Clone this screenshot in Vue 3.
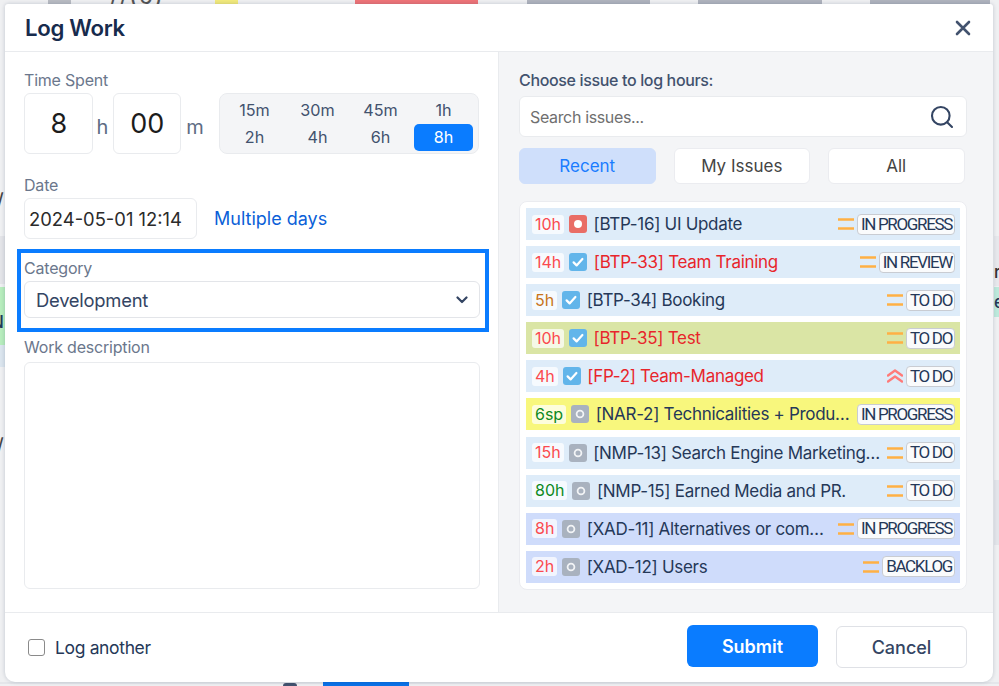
<script setup>
const presets = ['15m', '30m', '45m', '1h', '2h', '4h', '6h', '8h']
const strips = [
  { x: 48, w: 23, c: '#b9bcc3' },
  { x: 215, w: 23, c: '#f2ea7c' },
  { x: 355, w: 123, c: '#ee7478' },
  { x: 527, w: 123, c: '#b0b4be' },
  { x: 698, w: 124, c: '#b0b4be' },
  { x: 870, w: 120, c: '#b0b4be' },
]
const blue = '#deecf9'
const peri = '#cfdcfb'
const red = '#fb4a4f'
const issues = [
  { h: '10h', hc: red, icon: 'bug', t: '[BTP-16] UI Update', bg: blue, tc: '#253858', p: 'med', s: 'IN PROGRESS' },
  { h: '14h', hc: red, icon: 'task', t: '[BTP-33] Team Training', bg: blue, tc: '#e8252b', p: 'med', s: 'IN REVIEW' },
  { h: '5h', hc: '#c8741a', icon: 'task', t: '[BTP-34] Booking', bg: blue, tc: '#253858', p: 'med', s: 'TO DO' },
  { h: '10h', hc: red, icon: 'task', t: '[BTP-35] Test', bg: '#dae5a5', tc: '#e8252b', p: 'med', s: 'TO DO' },
  { h: '4h', hc: red, icon: 'task', t: '[FP-2] Team-Managed', bg: blue, tc: '#e8252b', p: 'high', s: 'TO DO' },
  { h: '6sp', hc: '#0f8a1f', icon: 'sub', t: '[NAR-2] Technicalities + Production', bg: '#f8f77d', tc: '#253858', p: '', s: 'IN PROGRESS' },
  { h: '15h', hc: red, icon: 'sub', t: '[NMP-13] Search Engine Marketing/SEO and more', bg: blue, tc: '#253858', p: 'med', s: 'TO DO' },
  { h: '80h', hc: '#0f8a1f', icon: 'sub', t: '[NMP-15] Earned Media and PR.', bg: blue, tc: '#253858', p: 'med', s: 'TO DO' },
  { h: '8h', hc: red, icon: 'sub', t: '[XAD-11] Alternatives or competitors list', bg: peri, tc: '#253858', p: 'med', s: 'IN PROGRESS' },
  { h: '2h', hc: red, icon: 'sub', t: '[XAD-12] Users', bg: peri, tc: '#253858', p: 'med', s: 'BACKLOG' },
]
</script>

<template>
  <div class="page">
    <div class="backdrop">
      <i
        v-for="s in strips"
        :key="s.x"
        class="strip"
        :style="{ left: s.x + 'px', width: s.w + 'px', background: s.c }"
      ></i>
      <i class="left-gray"></i>
      <i class="left-green"></i>
      <i class="left-pale"></i>
      <i class="right-gray"></i>
      <i class="right-gray2"></i>
      <i class="right-green"></i>
      <i class="bottom-line"></i>
      <i class="bottom-blue"></i>
      <i class="bottom-dot"></i>
      <b class="frag f-top">//(6)</b>
      <b class="frag f-l1">/</b>
      <b class="frag f-l2">/</b>
      <b class="frag f-n">N</b>
      <b class="frag f-r">r</b>
      <b class="frag f-e">e</b>
    </div>

    <div class="modal">
      <header class="head">
        <h1>Log Work</h1>
        <svg class="close" viewBox="0 0 16 16" width="16" height="16">
          <path d="M2 2l12 12M14 2L2 14" stroke="#42526e" stroke-width="2.6" stroke-linecap="round" fill="none" />
        </svg>
      </header>

      <div class="body">
        <section class="left">
          <div class="label l-time">Time Spent</div>
          <div class="time-row">
            <div class="box">8</div>
            <span class="unit u-h">h</span>
            <div class="box">00</div>
            <span class="unit u-m">m</span>
            <div class="presets">
              <span v-for="p in presets" :key="p" class="preset" :class="{ active: p === '8h' }">{{ p }}</span>
            </div>
          </div>

          <div class="label l-date">Date</div>
          <div class="date-row">
            <div class="date">2024-05-01 12:14</div>
            <a class="multi">Multiple days</a>
          </div>

          <div class="cat-frame">
            <div class="label l-cat">Category</div>
            <div class="select">
              <span>Development</span>
              <svg viewBox="0 0 12 8" width="12" height="8">
                <path d="M1.5 1.5L6 6l4.5-4.5" stroke="#344563" stroke-width="2.2" stroke-linecap="round" stroke-linejoin="round" fill="none" />
              </svg>
            </div>
          </div>

          <div class="label l-desc">Work description</div>
          <div class="textarea"></div>
        </section>

        <section class="right">
          <div class="choose">Choose issue to log hours:</div>
          <div class="search">
            <span>Search issues...</span>
            <svg viewBox="0 0 24 24" width="24" height="24">
              <circle cx="10.8" cy="10.8" r="8.8" stroke="#344563" stroke-width="2.1" fill="none" />
              <path d="M17.4 17.4L22 22" stroke="#344563" stroke-width="2.1" stroke-linecap="round" />
            </svg>
          </div>
          <div class="tabs">
            <span class="tab active">Recent</span>
            <span class="tab">My Issues</span>
            <span class="tab">All</span>
          </div>
          <div class="list">
            <div v-for="i in issues" :key="i.t" class="row" :style="{ background: i.bg }">
              <span class="hours" :style="{ color: i.hc }">{{ i.h }}</span>
              <span class="ico" :class="'ico-' + i.icon">
                <svg v-if="i.icon === 'task'" viewBox="0 0 18 18" width="18" height="18">
                  <path d="M4.6 9.4l3 3 5.8-6.4" stroke="#fff" stroke-width="2.2" stroke-linecap="round" stroke-linejoin="round" fill="none" />
                </svg>
                <svg v-else-if="i.icon === 'bug'" viewBox="0 0 18 18" width="18" height="18">
                  <circle cx="9" cy="9" r="4" fill="#fff" />
                </svg>
                <svg v-else viewBox="0 0 18 18" width="18" height="18">
                  <circle cx="9" cy="9" r="3.4" stroke="#fff" stroke-width="1.8" fill="none" opacity=".85" />
                </svg>
              </span>
              <span class="title" :style="{ color: i.tc }">{{ i.t }}</span>
              <svg v-if="i.p === 'med'" class="prio" viewBox="0 0 16 12" width="16" height="12">
                <path d="M0.5 1.5h15M0.5 10.5h15" stroke="#ffb044" stroke-width="2.4" stroke-linecap="round" />
              </svg>
              <svg v-else-if="i.p === 'high'" class="prio" viewBox="0 0 16 14" width="16" height="14">
                <path d="M1 6.5L8 1.5l7 5M1 12.5L8 7.5l7 5" stroke="#ff7a78" stroke-width="2.4" stroke-linecap="round" stroke-linejoin="round" fill="none" />
              </svg>
              <span class="status">{{ i.s }}</span>
            </div>
          </div>
        </section>
      </div>

      <footer class="foot">
        <label class="check"><i class="cb"></i><span>Log another</span></label>
        <div class="actions">
          <button class="btn primary">Submit</button>
          <button class="btn ghost">Cancel</button>
        </div>
      </footer>
    </div>
  </div>
</template>

<style>
html, body { margin: 0; background: #eff0f2; overflow: hidden; }
</style>

<style scoped>
.page { width: 999px; height: 686px; position: relative; overflow: hidden; font-family: Inter, "Liberation Sans", sans-serif; }
.backdrop { position: absolute; inset: 0; background: #eff0f2; }
.backdrop i { position: absolute; display: block; }
.strip { top: 0; height: 4px; }
.left-gray { left: 0; top: 236px; width: 5px; height: 48px; background: #e3e4e8; }
.left-green { left: 0; top: 287px; width: 5px; height: 58px; background: #b7edbd; }
.left-pale { left: 0; top: 345px; width: 5px; height: 22px; background: #dbe5ee; }
.right-gray { left: 994px; top: 236px; width: 5px; height: 50px; background: #e7e8ec; }
.right-gray2 { left: 994px; top: 480px; width: 5px; height: 65px; background: #e3e5ea; }
.right-green { left: 994px; top: 287px; width: 5px; height: 30px; background: #bde9dc; }
.bottom-line { left: 0; top: 682px; width: 999px; height: 2px; background: #e4e6ea; }
.bottom-blue { left: 323px; top: 682px; width: 86px; height: 4px; background: #0a72e8; }
.bottom-dot { left: 283px; top: 683px; width: 14px; height: 3px; border-radius: 7px 7px 0 0; background: #42526e; }
.frag { position: absolute; font-weight: 500; color: #253858; line-height: 20px; }
.f-top { left: 110px; top: -13px; font-size: 21px; letter-spacing: 2px; color: #555; }
.f-l1 { left: -3px; top: 190px; font-size: 18px; color: #444; }
.f-l2 { left: -3px; top: 435px; font-size: 18px; color: #444; }
.f-n { left: -9px; top: 312px; font-size: 17px; }
.f-r { left: 994px; top: 262px; font-size: 17px; color: #333; }
.f-e { left: 994px; top: 292px; font-size: 17px; }

.modal { position: absolute; left: 5px; top: 4px; width: 988px; height: 678px; background: #fff; border-radius: 3px 3px 10px 10px; box-shadow: 0 0 4px rgba(9, 30, 66, .2); display: flex; flex-direction: column; overflow: hidden; }
.head { height: 47px; flex: none; border-bottom: 1px solid #e9ebee; display: flex; align-items: center; justify-content: space-between; padding: 0 22px 0 20px; }
.head h1 { margin: 0; font-size: 22.2px; font-weight: 600; color: #172b4d; letter-spacing: -.3px; }
.close { margin-top: 1px; }

.body { flex: 1; display: flex; min-height: 0; }
.left { width: 493px; flex: none; padding: 18px 0 0 19px; box-sizing: border-box; }
.label { font-size: 16px; line-height: 20px; color: #6b778c; letter-spacing: -.2px; }
.time-row { display: flex; align-items: stretch; height: 61px; margin-top: 3px; }
.box { width: 68.5px; box-sizing: border-box; border: 1px solid #e9ebee; border-radius: 6px; display: flex; align-items: center; justify-content: center; font-size: 27px; color: #1c1c1c; padding-left: 1px; }
.unit { width: 20px; font-size: 20px; color: #5e6c84; display: flex; align-items: center; justify-content: center; padding-top: 6px; box-sizing: border-box; }
.u-m { width: 38px; padding-right: 10px; }
.presets { width: 260px; box-sizing: border-box; background: #f4f5f7; border: 1px solid #e9ebee; border-radius: 8px; display: grid; grid-template-columns: repeat(4, 1fr); grid-auto-rows: 27px; padding: 3px; align-content: center; }
.preset { font-size: 16.2px; color: #42526e; display: flex; align-items: center; justify-content: center; border-radius: 5px; }
.preset.active { background: #0a7cff; color: #fff; margin: 0 2px; }
.l-date { margin-top: 21px; }
.date-row { display: flex; align-items: center; margin-top: 3px; }
.date { width: 173px; height: 41px; box-sizing: border-box; border: 1px solid #e9ebee; border-radius: 6px; display: flex; align-items: center; padding-left: 4px; font-size: 18.4px; color: #2b2b2b; white-space: nowrap; }
.multi { margin-left: 17px; font-size: 18px; color: #0b5fd8; }
.cat-frame { margin: 10px 0 0 -7px; width: 472px; height: 83px; box-sizing: border-box; border: 4px solid #0a7cff; padding: 5px 0 0 3px; }
.select { width: 456px; height: 37px; margin-top: 3px; box-sizing: border-box; border: 1px solid #e3e5e9; border-radius: 6px; display: flex; align-items: center; justify-content: space-between; padding: 0 11px 0 11px; font-size: 18.4px; letter-spacing: -.25px; color: #344563; }
.l-desc { margin-top: 5px; }
.textarea { width: 456px; height: 227px; margin-top: 5px; box-sizing: border-box; border: 1px solid #e9ebee; border-radius: 6px; }

.right { flex: 1; background: #f4f5f7; border-left: 1px solid #e9ebee; padding: 18px 0 0 20px; box-sizing: border-box; }
.choose { font-size: 16px; line-height: 20px; font-weight: 500; color: #42526e; letter-spacing: -.35px; }
.search { width: 448px; height: 41px; margin-top: 6px; box-sizing: border-box; background: #fff; border: 1px solid #e9ebee; border-radius: 6px; display: flex; align-items: center; justify-content: space-between; padding: 0 12px 0 10px; font-size: 16px; letter-spacing: -.35px; color: #6f6f6f; }
.tabs { display: flex; margin-top: 11px; }
.tab { width: 136.5px; height: 36px; margin-right: 18px; box-sizing: border-box; background: #fff; border: 1px solid #ebecf0; border-radius: 6px; display: flex; align-items: center; justify-content: center; font-size: 17px; color: #444; }
.tab.active { background: #cfdffb; border-color: #cfdffb; color: #1a7cff; }
.list { width: 448px; height: 389px; margin-top: 17px; box-sizing: border-box; background: #fff; border: 1px solid #ebecf0; border-radius: 8px; padding: 6px; display: flex; flex-direction: column; gap: 6.1px; }
.row { height: 32px; flex: none; display: flex; align-items: center; padding: 0 5px 0 6px; box-sizing: border-box; }
.hours { flex: none; height: 19px; padding: 0 3px; background: rgba(255, 255, 255, .72); border-radius: 3px; font-size: 16px; line-height: 19px; }
.ico { flex: none; width: 18px; height: 18px; border-radius: 3px; margin: 0 6.5px 0 5px; display: block; }
.ico svg { display: block; }
.ico-bug { background: #e96d66; }
.ico-task { background: #62b5ea; }
.ico-sub { background: #a9b2bf; }
.title { flex: 1; min-width: 0; font-size: 17px; letter-spacing: -.3px; white-space: nowrap; overflow: hidden; text-overflow: ellipsis; }
.prio { flex: none; margin: 0 3px 0 4px; }
.status { flex: none; height: 21px; padding: 0 2px 0 3px; box-sizing: border-box; background: #fafbfc; border: 1px solid #c9ccd2; border-radius: 4px; font-family: Roboto, Inter, sans-serif; font-size: 17px; line-height: 19px; letter-spacing: -1.35px; color: #253858; white-space: nowrap; }

.foot { height: 70px; flex: none; border-top: 1px solid #e9ebee; display: flex; align-items: center; justify-content: space-between; padding: 0 26px 2px 23px; box-sizing: border-box; }
.check { display: flex; align-items: center; font-size: 17.5px; letter-spacing: -.35px; color: #253858; margin-top: 1px; }
.cb { width: 17px; height: 17px; box-sizing: border-box; border: 1.5px solid #8a8a8a; border-radius: 3px; margin-right: 10px; }
.actions { display: flex; align-items: flex-start; }
.btn { width: 131px; height: 42px; border-radius: 6px; font-family: inherit; font-size: 18px; font-weight: 500; display: flex; align-items: center; justify-content: center; padding: 0; box-sizing: border-box; }
.primary { background: #0a7cff; color: #fff; border: 0; font-weight: 600; }
.ghost { background: #fff; border: 1px solid #dfe1e6; color: #344563; margin: 1px 0 0 18px; }
</style>
